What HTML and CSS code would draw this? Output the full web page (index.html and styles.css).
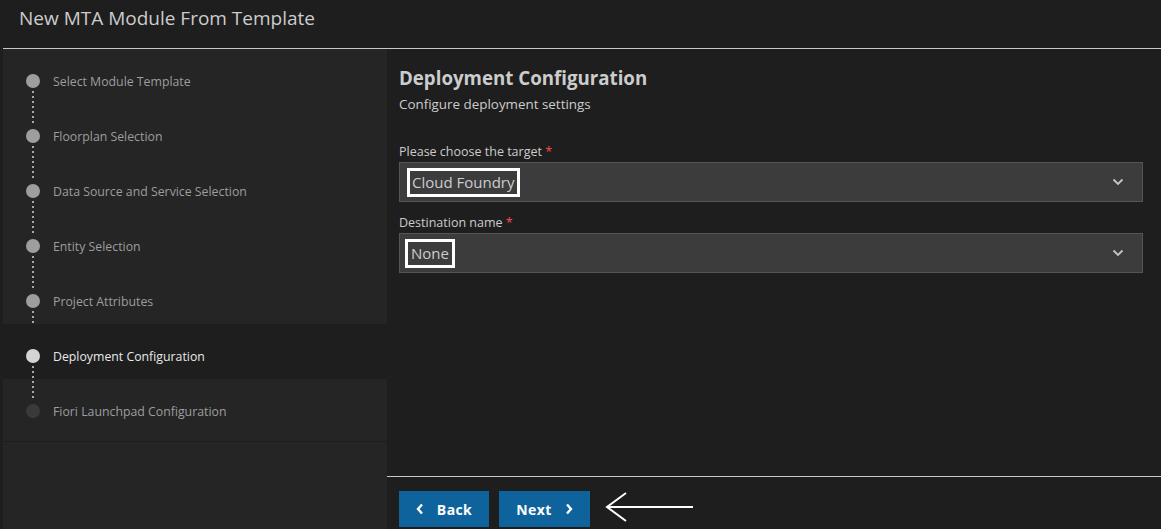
FILE: index.html
```html
<!DOCTYPE html>
<html lang="en">
<head>
<meta charset="utf-8">
<title>New MTA Module From Template</title>
<link rel="stylesheet" href="styles.css">
</head>
<body>
<header class="titlebar">New MTA Module From Template</header>
<div class="layout">
  <nav class="steps">
    <ul class="step-list">
      <li class="step done"><span class="dot"></span><span class="step-label">Select Module Template</span></li>
      <li class="step done"><span class="dot"></span><span class="step-label">Floorplan Selection</span></li>
      <li class="step done"><span class="dot"></span><span class="step-label">Data Source and Service Selection</span></li>
      <li class="step done"><span class="dot"></span><span class="step-label">Entity Selection</span></li>
      <li class="step done"><span class="dot"></span><span class="step-label">Project Attributes</span></li>
      <li class="step current"><span class="dot"></span><span class="step-label">Deployment Configuration</span></li>
      <li class="step future last"><span class="dot"></span><span class="step-label">Fiori Launchpad Configuration</span></li>
    </ul>
  </nav>
  <main class="content">
    <section class="form">
      <h1 class="page-title">Deployment Configuration</h1>
      <p class="page-sub">Configure deployment settings</p>
      <div class="field first">
        <label class="field-label">Please choose the target <span class="req">*</span></label>
        <div class="select"><span class="value"><span class="mark">Cloud Foundry</span></span>
          <svg class="chev" width="12" height="8" viewBox="0 0 12 8"><path d="M1.5 1.5 L6 6 L10.5 1.5" fill="none" stroke="#c5c5c5" stroke-width="1.8"/></svg>
        </div>
      </div>
      <div class="field">
        <label class="field-label">Destination name <span class="req">*</span></label>
        <div class="select"><span class="value"><span class="mark tight">None</span></span>
          <svg class="chev" width="12" height="8" viewBox="0 0 12 8"><path d="M1.5 1.5 L6 6 L10.5 1.5" fill="none" stroke="#c5c5c5" stroke-width="1.8"/></svg>
        </div>
      </div>
    </section>
    <footer class="footer">
      <button class="btn"><svg class="bchev" width="8" height="12" viewBox="0 0 8 12"><path d="M6 1.5 L2 6 L6 10.5" fill="none" stroke="#fff" stroke-width="2.4"/></svg>Back</button>
      <button class="btn next">Next<svg class="bchev" width="8" height="12" viewBox="0 0 8 12"><path d="M2 1.5 L6 6 L2 10.5" fill="none" stroke="#fff" stroke-width="2.4"/></svg></button>
      <svg class="arrow" width="90" height="32" viewBox="0 0 90 32"><path d="M2 16 H88 M21 2 L2 16 L21 30" fill="none" stroke="#fff" stroke-width="2"/></svg>
    </footer>
  </main>
</div>
</body>
</html>
```
FILE: styles.css
```css
* { box-sizing: border-box; }
html, body { margin: 0; padding: 0; }
body {
  background: #1e1e1e;
  color: #cccccc;
  font-family: "Open Sans", "Noto Sans", sans-serif;
  width: 1161px;
  height: 529px;
  overflow: hidden;
  display: flex;
  flex-direction: column;
}
.titlebar {
  height: 48px;
  padding: 5px 0 0 19px;
  font-size: 19px;
  line-height: 26px;
  color: #cccccc;
}
.layout {
  flex: 1;
  margin-left: 3px;
  border-top: 1px solid #c8c8c8;
  display: grid;
  grid-template-columns: 384px 1fr;
  min-height: 0;
}
.steps {
  background: #252526;
}
.step-list {
  list-style: none;
  margin: 0;
  padding: 0 0 7px;
  border-bottom: 1px solid #1e1e1e;
}
.step {
  height: 55px;
  display: flex;
  align-items: flex-start;
  padding: 25px 0 0 23px;
  position: relative;
  font-size: 12.3px;
  line-height: 16px;
  color: #9d9d9d;
}
.step .dot {
  width: 14px;
  height: 14px;
  border-radius: 50%;
  background: #9e9e9e;
  margin: 0 13px 0 0;
  flex: none;
}
.step::after {
  content: "";
  position: absolute;
  left: 29px;
  top: 42px;
  width: 2px;
  height: 34px;
  background: repeating-linear-gradient(to bottom, #a8a8a8 0 2px, transparent 2px 5px);
}
.step.last::after { display: none; }
.step.current { background: #1e1e1e; color: #e8e8e8; }
.step.current .dot { background: #d4d4d4; }
.step.future .dot { background: #3a3a3a; }
.step.future { color: #9d9d9d; }

.content {
  display: flex;
  flex-direction: column;
  min-height: 0;
}
.form {
  flex: 1;
  padding: 17px 18px 0 12px;
}
.page-title {
  margin: 0;
  font-size: 18.7px;
  line-height: 24px;
  font-weight: 700;
  color: #cccccc;
}
.page-sub {
  margin: 5px 0 0;
  font-size: 13.4px;
  line-height: 18px;
  color: #cccccc;
}
.field { margin-top: 12px; }
.field.first { margin-top: 30px; }
.field-label {
  display: block;
  font-size: 12.5px;
  line-height: 18px;
  margin-bottom: 1px;
  color: #cccccc;
}
.req { color: #f14c4c; }
.select {
  height: 40px;
  background: #3c3c3c;
  border: 1px solid #555555;
  display: flex;
  align-items: center;
  justify-content: space-between;
  padding: 0 18px 0 7px;
}
.value { font-size: 15px; color: #cccccc; display: flex; }
.mark {
  display: inline-block;
  border: 3px solid #ffffff;
  padding: 0 2px;
  line-height: 23px;
}
.mark.tight { margin-left: -2px; padding: 0 3px 0 3px; }
.footer {
  height: 53px;
  border-top: 1px solid #c8c8c8;
  display: flex;
  align-items: flex-start;
  padding: 14px 0 0 12px;
  gap: 10px;
}
.btn {
  height: 36px;
  width: 90px;
  background: #0e639c;
  border: none;
  color: #ffffff;
  font-family: "Open Sans", "Noto Sans", sans-serif;
  font-weight: 700;
  font-size: 14px;
  letter-spacing: 0.4px;
  display: flex;
  align-items: center;
  justify-content: center;
  gap: 13px;
  padding: 0;
}
.btn.next { width: 91px; }
.arrow { margin: 0 0 0 5px; }
```
